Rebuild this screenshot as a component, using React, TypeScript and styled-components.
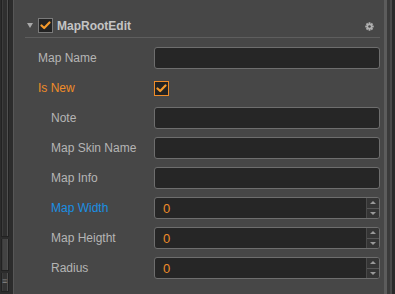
import styled, { createGlobalStyle } from 'styled-components';

const GlobalStyle = createGlobalStyle`
	html, body {
		margin: 0;
		padding: 0;
		background: #474747;
	}
	body {
		font-family: "Liberation Sans", Arial, sans-serif;
		font-size: 12px;
	}
`;

const Frame = styled.div`
	display: flex;
	width: 395px;
	height: 294px;
	overflow: hidden;
`;

const LeftDock = styled.div`
	width: 14px;
	display: flex;
	flex-direction: column;
	background: #2c2c2c;
	border-right: 1px solid #575757;
	box-sizing: border-box;
`;

const DockBox = styled.div<{ $h?: number; $bg?: string }>`
	height: ${(p) => (p.$h ? `${p.$h}px` : 'auto')};
	flex: ${(p) => (p.$h ? 'none' : '1')};
	margin: 0 4px 0 1px;
	border: 1px solid #222;
	border-top: none;
	background: ${(p) => p.$bg || '#2f2f2f'};
	box-shadow: inset -1px 0 0 #505050, inset 1px 0 0 #3c3c3c;
	color: #888;
	font-size: 9px;
	line-height: 9px;
	overflow: hidden;
	margin-bottom: 2px;
`;

const Panel = styled.div`
	flex: 1;
	background: #474747;
	display: flex;
	flex-direction: column;
`;

const RightDock = styled.div`
	width: 11px;
	display: flex;
	background: #2a2a2a;
`;

const DockStripe = styled.div<{ $w: number; $c: string }>`
	width: ${(p) => p.$w}px;
	background: ${(p) => p.$c};
`;

const Header = styled.div`
	display: flex;
	align-items: center;
	height: 23px;
	padding: 14px 0 0 13px;
	margin-right: 4px;
	position: relative;
`;

const Arrow = styled.span`
	width: 0;
	height: 0;
	border-left: 3px solid transparent;
	border-right: 3px solid transparent;
	border-top: 5px solid #a8a8a8;
	margin-right: 5px;
`;

const Title = styled.span`
	font-weight: bold;
	color: #c4c4c4;
	margin-left: 4px;
`;

const GearWrap = styled.span`
	margin-left: auto;
	margin-right: 6px;
	display: flex;
	margin-top: 2px;
`;

const Divider = styled.div`
	height: 1px;
	background: #5e5e5e;
	margin: 0 4px 0 11px;
`;

const Rows = styled.div`
	padding-top: 5px;
	display: flex;
	flex-direction: column;
`;

const Row = styled.div`
	display: flex;
	align-items: center;
	height: 30px;
`;

const Label = styled.div<{ $indent: boolean; $tone?: 'orange' | 'blue' }>`
	width: ${(p) => (p.$indent ? 103 : 116)}px;
	padding-left: ${(p) => (p.$indent ? 37 : 24)}px;
	color: ${(p) =>
		p.$tone === 'orange' ? '#f08c28' : p.$tone === 'blue' ? '#1a8fe3' : '#b5b5b5'};
	margin-top: -1px;
`;

const TextBox = styled.div`
	width: 226px;
	height: 22px;
	box-sizing: border-box;
	background: #262626;
	border: 1px solid #6e6e6e;
	border-radius: 3px;
	display: flex;
	align-items: center;
	color: #f08c28;
	font-size: 13px;
	padding-left: 8px;
	position: relative;
	overflow: hidden;
`;

const Spinner = styled.div`
	margin-left: auto;
	width: 12px;
	height: 100%;
	display: flex;
	flex-direction: column;
	background: #353535;
	border-left: 1px solid #4a4a4a;
`;

const SpinHalf = styled.div<{ $down?: boolean }>`
	flex: 1;
	display: flex;
	align-items: center;
	justify-content: center;
	border-top: ${(p) => (p.$down ? '1px solid #555' : 'none')};
	&::after {
		content: '';
		border-left: 3px solid transparent;
		border-right: 3px solid transparent;
		${(p) => (p.$down ? 'border-top: 3px solid #9a9a9a;' : 'border-bottom: 3px solid #9a9a9a;')}
	}
`;

const Check = styled.span<{ $active?: boolean }>`
	width: 15px;
	height: 15px;
	box-sizing: border-box;
	display: inline-flex;
	align-items: center;
	justify-content: center;
	background: #232323;
	border: 1px solid ${(p) => (p.$active ? '#f08c28' : '#7a7a7a')};
`;

const CheckMark = () => (
	<svg width="11" height="9" viewBox="0 0 11 9">
		<polyline points="1.5,4.5 4.2,7 9.5,1.5" fill="none" stroke="#f59a2c" strokeWidth="2.2" strokeLinecap="round" strokeLinejoin="round" />
	</svg>
);

const Gear = () => (
	<svg width="9" height="9" viewBox="0 0 10 10">
		{[0, 45, 90, 135].map((a) => (
			<rect key={a} x="4" y="0.3" width="2" height="9.4" fill="#b0b0b0" transform={`rotate(${a} 5 5)`} />
		))}
		<circle cx="5" cy="5" r="3.3" fill="#b0b0b0" />
		<circle cx="5" cy="5" r="1.4" fill="#474747" />
	</svg>
);

type Field = {
	label: string;
	indent: boolean;
	tone?: 'orange' | 'blue';
	kind: 'text' | 'check' | 'number';
};

const fields: Field[] = [
	{ label: 'Map Name', indent: false, kind: 'text' },
	{ label: 'Is New', indent: false, tone: 'orange', kind: 'check' },
	{ label: 'Note', indent: true, kind: 'text' },
	{ label: 'Map Skin Name', indent: true, kind: 'text' },
	{ label: 'Map Info', indent: true, kind: 'text' },
	{ label: 'Map Width', indent: true, tone: 'blue', kind: 'number' },
	{ label: 'Map Heigtht', indent: true, kind: 'number' },
	{ label: 'Radius', indent: true, kind: 'number' },
];

const App = () => {
	return (
		<>
			<GlobalStyle />
			<Frame>
				<LeftDock>
					<DockBox $h={236} />
					<DockBox $h={31} $bg="#434343" />
					<DockBox $bg="#333">
						<div style={{ paddingTop: 4 }}>≡</div>
					</DockBox>
				</LeftDock>
				<Panel>
					<Header>
						<Arrow />
						<Check>
							<CheckMark />
						</Check>
						<Title>MapRootEdit</Title>
						<GearWrap>
							<Gear />
						</GearWrap>
					</Header>
					<Divider />
					<Rows>
						{fields.map((f) => (
							<Row key={f.label}>
								<Label $indent={f.indent} $tone={f.tone}>
									{f.label}
								</Label>
								{f.kind === 'check' ? (
									<Check $active>
										<CheckMark />
									</Check>
								) : f.kind === 'number' ? (
									<TextBox>
										0
										<Spinner>
											<SpinHalf />
											<SpinHalf $down />
										</Spinner>
									</TextBox>
								) : (
									<TextBox />
								)}
							</Row>
						))}
					</Rows>
				</Panel>
				<RightDock>
					<DockStripe $w={3} $c="#5c5c5c" />
					<DockStripe $w={3} $c="#3a3a3a" />
					<DockStripe $w={2} $c="#4a4a4a" />
					<DockStripe $w={3} $c="#2a2a2a" />
				</RightDock>
			</Frame>
		</>
	);
};

export default App;
